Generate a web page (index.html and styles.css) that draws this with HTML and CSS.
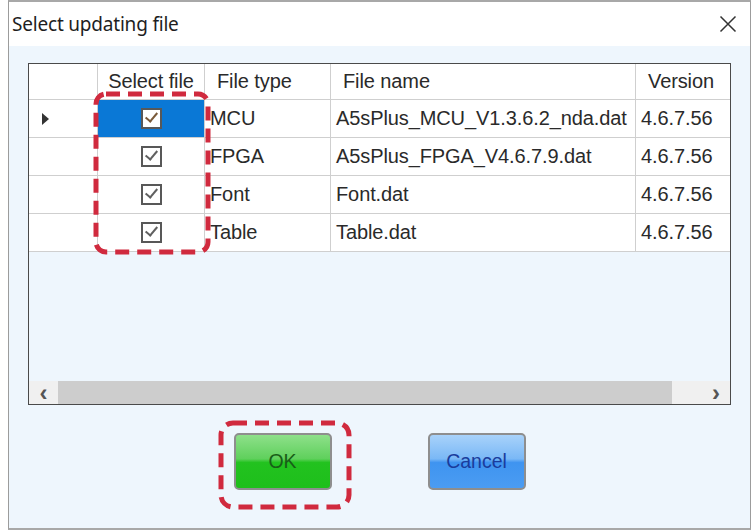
FILE: index.html
```html
<!DOCTYPE html>
<html lang="en">
<head>
    <meta charset="UTF-8">
    <meta name="viewport" content="width=device-width, initial-scale=1.0">
    <title>Select updating file</title>
    <link rel="stylesheet" href="styles.css">
</head>
<body>
    <div class="window">
        <div class="titlebar">
            <span class="title">Select updating file</span>
            <svg class="close" width="18" height="18" viewBox="0 0 18 18">
                <path d="M1.5 1.5 L16.5 16.5 M16.5 1.5 L1.5 16.5" stroke="#333" stroke-width="1.5" fill="none"/>
            </svg>
        </div>
        <div class="client">
            <div class="grid">
                <div class="rows">
                    <div class="row head">
                        <div class="cell rh"></div>
                        <div class="cell sel center">Select file</div>
                        <div class="cell hd">File type</div>
                        <div class="cell hd">File name</div>
                        <div class="cell hd">Version</div>
                    </div>
                    <div class="row">
                        <div class="cell rh"><span class="arrow"></span></div>
                        <div class="cell sel center active"><span class="check"></span></div>
                        <div class="cell">MCU</div>
                        <div class="cell">A5sPlus_MCU_V1.3.6.2_nda.dat</div>
                        <div class="cell">4.6.7.56</div>
                    </div>
                    <div class="row">
                        <div class="cell rh"></div>
                        <div class="cell sel center"><span class="check"></span></div>
                        <div class="cell">FPGA</div>
                        <div class="cell">A5sPlus_FPGA_V4.6.7.9.dat</div>
                        <div class="cell">4.6.7.56</div>
                    </div>
                    <div class="row">
                        <div class="cell rh"></div>
                        <div class="cell sel center"><span class="check"></span></div>
                        <div class="cell">Font</div>
                        <div class="cell">Font.dat</div>
                        <div class="cell">4.6.7.56</div>
                    </div>
                    <div class="row">
                        <div class="cell rh"></div>
                        <div class="cell sel center"><span class="check"></span></div>
                        <div class="cell">Table</div>
                        <div class="cell">Table.dat</div>
                        <div class="cell">4.6.7.56</div>
                    </div>
                </div>
                <div class="hscroll">
                    <div class="sbtn">&#8249;</div>
                    <div class="thumb"></div>
                    <div class="sbtn right">&#8250;</div>
                </div>
            </div>
            <div class="buttons">
                <button class="btn ok">OK</button>
                <button class="btn cancel">Cancel</button>
            </div>
        </div>
        <!-- red dashed callouts drawn over the dialog -->
        <svg class="marks" width="743" height="530" viewBox="0 0 743 530">
            <rect x="87" y="92" width="112" height="158" rx="10" ry="10"/>
            <rect x="212" y="421" width="128" height="84" rx="12" ry="12"/>
        </svg>
    </div>
</body>
</html>
```

FILE: styles.css
```css
body {
    margin: 0;
    background: #ffffff;
    font-family: "Liberation Sans", Arial, sans-serif;
}
.window {
    position: relative;
    margin-left: 8px;
    width: 741px;
    height: 526px;
    border: 1px solid #9c9c9c;
    border-top: 2px solid #a8a8a8;
    border-bottom: 2px solid #a8a8a8;
    background: #ffffff;
    display: flex;
    flex-direction: column;
}
.titlebar {
    height: 44px;
    display: flex;
    align-items: center;
    justify-content: space-between;
    padding: 0 13px 0 3px;
    background: #ffffff;
}
.title {
    font-family: "Noto Sans", sans-serif;
    font-size: 19px;
    color: #1e1e1e;
    letter-spacing: -0.2px;
}
.client {
    flex: 1;
    background: #eef6fd;
    padding: 17px 0 0 19px;
}
.grid {
    width: 701px;
    height: 340px;
    border: 1.5px solid #4a4a4a;
    display: flex;
    flex-direction: column;
    overflow: hidden;
}
.rows {
    flex: 1;
    overflow: hidden;
}
.row {
    display: grid;
    grid-template-columns: 69px 107px 126px 305px 140px;
    height: 38px;
    background: #ffffff;
    width: 747px;
}
.row.head {
    height: 36px;
}
.cell {
    border-right: 1px solid #cfcfcf;
    border-bottom: 1px solid #cfcfcf;
    font-size: 20px;
    color: #2a2a2a;
    display: flex;
    align-items: center;
    padding-left: 5px;
    white-space: nowrap;
    overflow: hidden;
    letter-spacing: -0.1px;
}
.cell.hd {
    padding-left: 12px;
}
.cell.center {
    justify-content: center;
    padding-left: 0;
}
.cell.rh {
    padding-left: 13px;
}
.cell.active {
    background: #0a78d6;
}
.arrow {
    width: 0;
    height: 0;
    border-top: 6px solid transparent;
    border-bottom: 6px solid transparent;
    border-left: 7px solid #333;
}
.check {
    width: 17px;
    height: 17px;
    border: 2px solid #585858;
    background: #ffffff;
    position: relative;
}
.check::after {
    content: "";
    position: absolute;
    left: 5px;
    top: 0;
    width: 5px;
    height: 10px;
    border-right: 2px solid #606060;
    border-bottom: 2px solid #606060;
    transform: rotate(40deg);
}
.active .check::after {
    border-color: #7a5a3a;
}
.hscroll {
    height: 23px;
    display: flex;
    background: #f0f0f0;
}
.sbtn {
    width: 29px;
    display: flex;
    align-items: center;
    justify-content: center;
    font-size: 24px;
    font-weight: bold;
    color: #555;
    line-height: 1;
}
.sbtn.right {
    width: 58px;
    justify-content: flex-end;
    padding-right: 10px;
    box-sizing: border-box;
}
.thumb {
    flex: 1;
    background: #cdcdcd;
}
.buttons {
    display: flex;
    justify-content: center;
    gap: 96px;
    margin-top: 28px;
    padding-right: 19px;
}
.btn {
    width: 98px;
    height: 57px;
    border: 2px solid #8e8e8e;
    border-radius: 5px;
    font-family: "Liberation Sans", Arial, sans-serif;
    font-size: 19.5px;
    cursor: pointer;
}
.ok {
    background: linear-gradient(#8ee08a 0%, #5fd05c 45%, #22c21f 52%, #1ebf1b 100%);
    color: #185e18;
}
.cancel {
    background: linear-gradient(#a8d2fa 0%, #7ab8f6 45%, #3f94f0 52%, #4b9cf2 100%);
    color: #1a3c9c;
}
.marks {
    position: absolute;
    left: 0;
    top: 0;
    pointer-events: none;
}
.marks rect {
    fill: none;
    stroke: #d02a3e;
    stroke-width: 5;
    stroke-dasharray: 14 8;
}
```
